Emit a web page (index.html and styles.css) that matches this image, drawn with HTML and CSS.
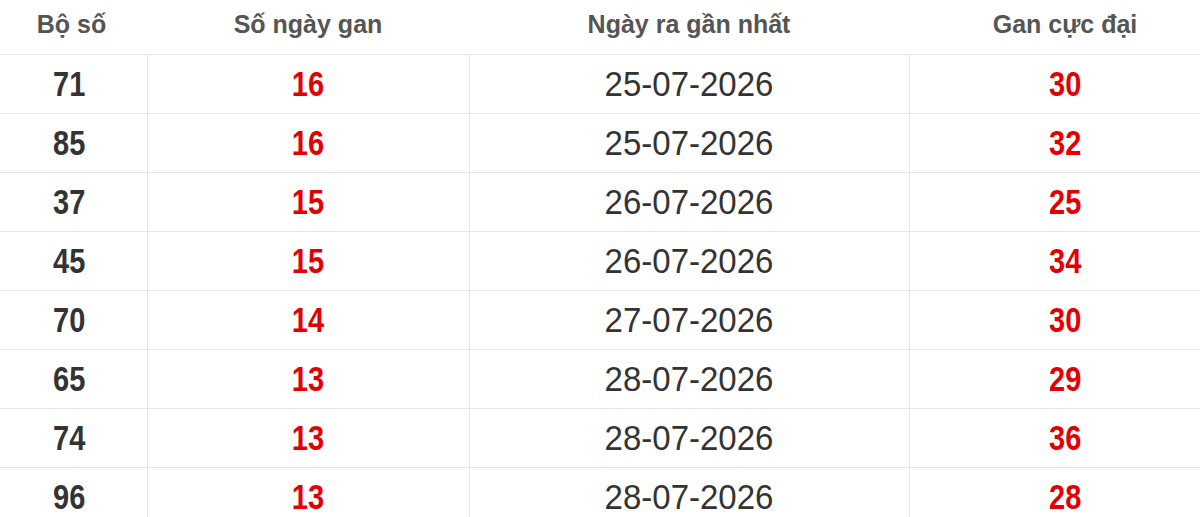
FILE: index.html
```html
<!DOCTYPE html>
<html lang="vi">
<head>
<meta charset="utf-8">
<title>Lô gan</title>
<link rel="stylesheet" href="styles.css">
</head>
<body>
<table class="gan">
  <colgroup>
    <col class="c1"><col class="c2"><col class="c3"><col class="c4">
  </colgroup>
  <thead>
    <tr><th>Bộ số</th><th>Số ngày gan</th><th>Ngày ra gần nhất</th><th>Gan cực đại</th></tr>
  </thead>
  <tbody>
    <tr><td><span class="num">71</span></td><td><span class="num red">16</span></td><td><span class="date">25-07-2026</span></td><td><span class="num red">30</span></td></tr>
    <tr><td><span class="num">85</span></td><td><span class="num red">16</span></td><td><span class="date">25-07-2026</span></td><td><span class="num red">32</span></td></tr>
    <tr><td><span class="num">37</span></td><td><span class="num red">15</span></td><td><span class="date">26-07-2026</span></td><td><span class="num red">25</span></td></tr>
    <tr><td><span class="num">45</span></td><td><span class="num red">15</span></td><td><span class="date">26-07-2026</span></td><td><span class="num red">34</span></td></tr>
    <tr><td><span class="num">70</span></td><td><span class="num red">14</span></td><td><span class="date">27-07-2026</span></td><td><span class="num red">30</span></td></tr>
    <tr><td><span class="num">65</span></td><td><span class="num red">13</span></td><td><span class="date">28-07-2026</span></td><td><span class="num red">29</span></td></tr>
    <tr><td><span class="num">74</span></td><td><span class="num red">13</span></td><td><span class="date">28-07-2026</span></td><td><span class="num red">36</span></td></tr>
    <tr><td><span class="num">96</span></td><td><span class="num red">13</span></td><td><span class="date">28-07-2026</span></td><td><span class="num red">28</span></td></tr>
  </tbody>
</table>
</body>
</html>
```
FILE: styles.css
```css
html, body {
  margin: 0;
  padding: 0;
  background: #fff;
  overflow: hidden;
}
body {
  font-family: "Liberation Sans", Arial, sans-serif;
  color: #333;
}
.gan {
  border-collapse: collapse;
  table-layout: fixed;
  width: 1221px;
}
.c1 { width: 147px; }
.c2 { width: 322px; }
.c3 { width: 440px; }
.c4 { width: 312px; }
.gan th {
  height: 48px;
  padding: 0 0 6px;
  font-size: 25px;
  font-weight: bold;
  color: #555;
  text-align: center;
  border-bottom: 1px solid #e6e6e6;
}
.gan th:first-child { padding-right: 4px; }
.gan td {
  height: 58px;
  padding: 0;
  text-align: center;
  vertical-align: middle;
  border-bottom: 1px solid #e6e6e6;
  border-left: 1px solid #e6e6e6;
}
.gan td:first-child {
  border-left: none;
  padding-right: 8px;
}
.num {
  display: inline-block;
  font-size: 29px;
  font-weight: bold;
  color: #333;
  transform: scaleY(1.2);
}
.num.red { color: #e30000; }
.date {
  display: inline-block;
  font-size: 33px;
  color: #333;
  transform: scaleY(1.06);
}
```
